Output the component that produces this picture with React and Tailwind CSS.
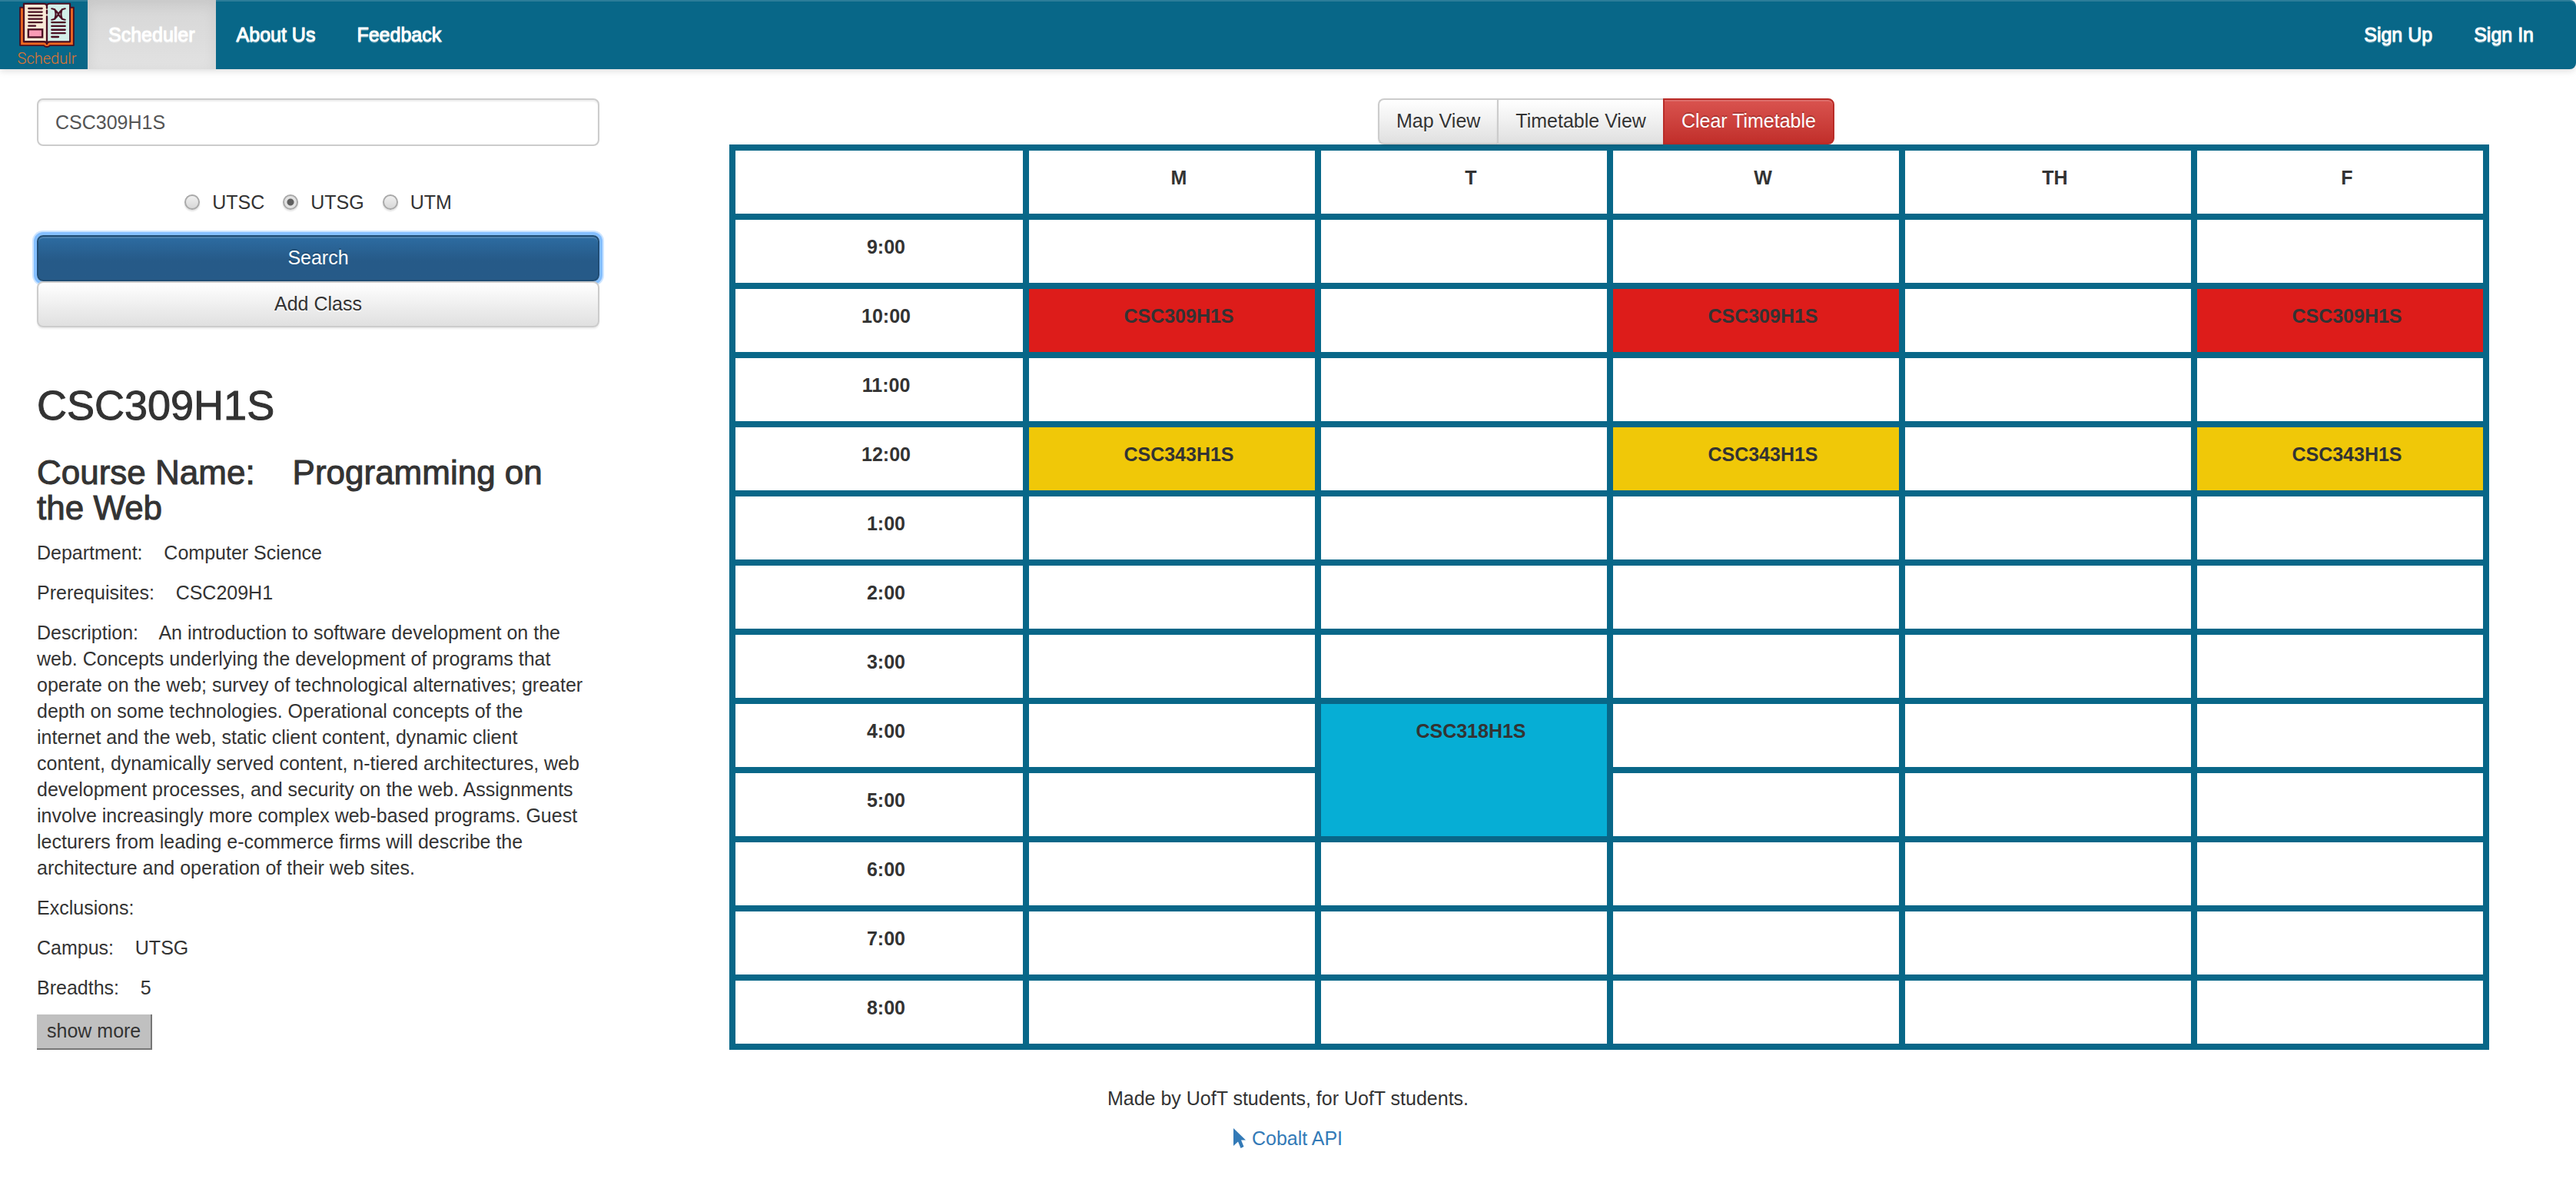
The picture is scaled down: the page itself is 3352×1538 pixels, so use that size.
import React from "react";

const DAYS = ["M", "T", "W", "TH", "F"];
const HOURS = ["9:00", "10:00", "11:00", "12:00", "1:00", "2:00", "3:00", "4:00", "5:00", "6:00", "7:00", "8:00"];

const CLASSES = [
  { code: "CSC309H1S", days: ["M", "W", "F"], start: "10:00", length: 1, tone: "bg-[#dd1c1a]" },
  { code: "CSC343H1S", days: ["M", "W", "F"], start: "12:00", length: 1, tone: "bg-[#f0c808]" },
  { code: "CSC318H1S", days: ["T"], start: "4:00", length: 2, tone: "bg-[#06aed5]" },
];

const DESCRIPTION =
  "An introduction to software development on the web. Concepts underlying the development of programs that operate on the web; survey of technological alternatives; greater depth on some technologies. Operational concepts of the internet and the web, static client content, dynamic client content, dynamically served content, n-tiered architectures, web development processes, and security on the web. Assignments involve increasingly more complex web-based programs. Guest lecturers from leading e-commerce firms will describe the architecture and operation of their web sites.";

const GAP = "\u00a0\u00a0\u00a0 ";

function Logo() {
  return (
    <svg viewBox="0 0 78 62" className="h-[62px] w-[78px]" aria-hidden="true">
      <path d="M3 8h72v51H43q-1 2-4 2t-4-2H3z" fill="#f26a21" stroke="#4a0f22" strokeWidth="2" strokeLinejoin="round" />
      <path d="M8 3h27q4 0 4 3 0-3 4-3h27v51H43q-4 0-4 3 0-3-4-3H8z" fill="#f9ead6" stroke="#4a0f22" strokeWidth="2.4" strokeLinejoin="round" />
      <path d="M69 4H43q-3 0-3 3v46h29z" fill="#d3eee8" />
      <path d="M39 6v3M39 12v4M39 20v35" stroke="#4a0f22" strokeWidth="2.4" strokeLinecap="round" />
      <path
        d="M14.500 9.300h18M14.500 14h18M14.500 18.700h18M14.500 23.300h18M14.500 28h18M14.500 32.700h9M45.500 28h18M45.500 33h18M45.500 38h18M45.500 42.500h18M45.500 47.500h9"
        stroke="#4a0f22"
        strokeWidth="2.4"
        strokeLinecap="round"
      />
      <rect x="14" y="37.500" width="19" height="10.500" fill="#f99bb5" stroke="#4a0f22" strokeWidth="2.4" />
      <path
        d="M45.500 9.500q5 0 9 7.500t9 7.500M63.500 9.500q-5 0-9 7.500t-9 7.500M49.500 10.500q3 6.500 0 13M59.500 10.500q-3 6.500 0 13"
        fill="none"
        stroke="#4a0f22"
        strokeWidth="2.2"
        strokeLinecap="round"
      />
    </svg>
  );
}

function NavLink({ active, children }) {
  const base = "flex items-center px-[27px] text-white [-webkit-text-stroke:1px] [text-shadow:0_2px_0_rgba(255,255,255,0.25)]";
  const on = "bg-linear-to-b from-[#d6d6d6] to-[#e2e2e2] shadow-[inset_0_6px_18px_rgba(0,0,0,0.075)]";
  return (
    <a href="#" className={active ? `${base} ${on}` : base}>
      {children}
    </a>
  );
}

function Field({ label, value = "" }) {
  return <p className="mb-[18px] pr-4">{`${label}:${GAP}${value}`}</p>;
}

function Campus({ name, checked }) {
  return (
    <label className="flex items-center">
      <input
        type="radio"
        name="campus"
        defaultChecked={checked}
        className="mr-4 size-5 appearance-none rounded-full border-2 border-[#a9a9a9] bg-linear-to-b from-[#f0f0f0] to-[#d8d8d8] shadow-[0_2px_2px_rgba(0,0,0,0.12)] checked:bg-[radial-gradient(circle,#5f5f5f_0_4px,#e2e2e2_5px)]"
      />
      {name}
    </label>
  );
}

const LIGHT =
  "border-2 border-[#ccc] bg-linear-to-b from-white to-[#e0e0e0] pb-0.5 [text-shadow:0_2px_0_#fff] shadow-[inset_0_2px_0_rgba(255,255,255,0.15),0_2px_2px_rgba(0,0,0,0.075)]";

function findClass(day, hourIndex) {
  return CLASSES.find((c) => {
    const start = HOURS.indexOf(c.start);
    return c.days.includes(day) && hourIndex >= start && hourIndex < start + c.length;
  });
}

const CELL = "h-[90px] border-8 border-[#086788] pt-[18px] pl-[18px] text-center align-top font-bold";

function Timetable() {
  return (
    <table className="w-full table-fixed border-collapse">
      <colgroup>
        <col className="w-[382px]" />
        <col span={5} />
      </colgroup>
      <thead>
        <tr>
          <td className={CELL} />
          {DAYS.map((d) => (
            <th key={d} scope="col" className={CELL}>
              {d}
            </th>
          ))}
        </tr>
      </thead>
      <tbody>
        {HOURS.map((hour, i) => (
          <tr key={hour}>
            <th scope="row" className={CELL}>
              {hour}
            </th>
            {DAYS.map((d) => {
              const c = findClass(d, i);
              if (!c) return <td key={d} className={CELL} />;
              if (c.start !== hour) return null;
              return (
                <td key={d} rowSpan={c.length} className={`${CELL} ${c.tone}`}>
                  {c.code}
                </td>
              );
            })}
          </tr>
        ))}
      </tbody>
    </table>
  );
}

export default function App() {
  return (
    <div className="min-h-screen bg-white font-['Liberation_Sans',Arial,sans-serif] text-[25px] leading-[34px] text-[#333]">
      <nav className="flex h-[90px] rounded-r-lg bg-[#086788] shadow-[inset_0_2px_0_rgba(255,255,255,0.15),0_2px_10px_rgba(0,0,0,0.15)]">
        <a href="#" className="flex w-[114px] flex-col items-center pt-0.5 pl-2">
          <Logo />
          <span className="font-[Roboto,sans-serif] text-[20px] leading-7 font-light text-[#e0752f]">Schedulr</span>
        </a>
        <NavLink active>Scheduler</NavLink>
        <NavLink>About Us</NavLink>
        <NavLink>Feedback</NavLink>
        <div className="mr-7 ml-auto flex">
          <NavLink>Sign Up</NavLink>
          <NavLink>Sign In</NavLink>
        </div>
      </nav>

      <main className="grid grid-cols-[732fr_2290fr] gap-x-[169px] pt-[38px] pr-[113px] pl-12">
        <aside>
          <form onSubmit={(e) => e.preventDefault()}>
            <input
              type="text"
              aria-label="Course code"
              defaultValue="CSC309H1S"
              className="block h-[62px] w-full rounded-lg border-2 border-[#ccc] px-[22px] text-[#555] shadow-[inset_0_2px_2px_rgba(0,0,0,0.075)]"
            />
            <div className="mt-14 mb-[26px] flex justify-center gap-6">
              <Campus name="UTSC" />
              <Campus name="UTSG" checked />
              <Campus name="UTM" />
            </div>
            <button
              type="submit"
              className="block h-[60px] w-full rounded-lg border-2 border-[#204d74] bg-linear-to-b from-[#2d6ca2] to-[#265a88] to-55% pb-0.5 text-white shadow-[inset_0_2px_0_rgba(255,255,255,0.15),0_0_0_4px_#85bfff,0_0_0_6px_#cde5ff] [text-shadow:0_-2px_0_rgba(0,0,0,0.2)]"
            >
              Search
            </button>
            <button type="button" className={`${LIGHT} relative block h-[60px] w-full rounded-lg`}>
              Add Class
            </button>
          </form>

          <h2 className="mt-[71px] text-[54px] leading-[60px] [-webkit-text-stroke:1px]">CSC309H1S</h2>
          <h3 className="mt-[35px] mb-[18px] pr-4 text-[44px] leading-[46px] [-webkit-text-stroke:1px]">
            {`Course Name:${GAP}Programming on the Web`}
          </h3>
          <Field label="Department" value="Computer Science" />
          <Field label="Prerequisites" value="CSC209H1" />
          <Field label="Description" value={DESCRIPTION} />
          <Field label="Exclusions" />
          <Field label="Campus" value="UTSG" />
          <Field label="Breadths" value="5" />
          <button type="button" className="block h-[46px] border-r-2 border-b-2 border-[#767676] bg-[#c0c0c0] px-[13px] pb-0.5">
            show more
          </button>
        </aside>

        <section>
          <div className="flex justify-center pr-2">
            <button type="button" className={`${LIGHT} h-[60px] rounded-l-lg border-r-0 px-[22px]`}>
              Map View
            </button>
            <button type="button" className={`${LIGHT} h-[60px] border-r-0 px-[22px]`}>
              Timetable View
            </button>
            <button
              type="button"
              className="h-[60px] rounded-r-lg border-2 border-[#b92c28] bg-linear-to-b from-[#d9534f] to-[#c12e2a] px-[22px] pb-0.5 text-white shadow-[inset_0_2px_0_rgba(255,255,255,0.15)] [text-shadow:0_-2px_0_rgba(0,0,0,0.2)]"
            >
              Clear Timetable
            </button>
          </div>
          <Timetable />
        </section>
      </main>

      <footer className="mt-[46px] text-center">
        <p className="mb-[18px]">Made by UofT students, for UofT students.</p>
        <a href="#" className="inline-flex items-center gap-2 text-[#337ab7]">
          <svg viewBox="0 0 16 26" className="h-[26px] w-4" fill="currentColor" aria-hidden="true">
            <path d="M0 0l16 15.500h-6l3.500 8.500-4 2-3.500-8.500L0 23z" />
          </svg>
          Cobalt API
        </a>
      </footer>
    </div>
  );
}
